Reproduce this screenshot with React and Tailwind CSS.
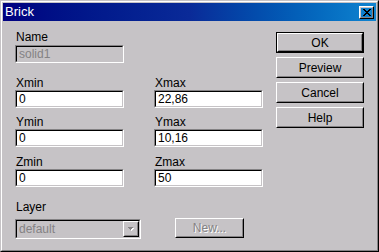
import React from "react";

const font = { fontFamily: '"Liberation Sans", Arial, sans-serif' };

function Label({ children, className = "" }) {
  return (
    <div className={`h-[13px] pl-[1px] text-[12px] leading-[13px] text-black whitespace-nowrap ${className}`}>
      {children}
    </div>
  );
}

function Field({ value, disabled, className = "" }) {
  return (
    <div className={`border border-t-[#848284] border-l-[#848284] border-b-white border-r-white ${className}`}>
      <div
        className={`flex h-full w-full items-center border border-t-black border-l-black border-b-[#c6c3c6] border-r-[#c6c3c6] pl-[2px] text-[12px] leading-[14px] ${
          disabled ? "bg-[#c6c3c6] text-[#848284]" : "bg-white text-black"
        }`}
      >
        {value}
      </div>
    </div>
  );
}

function Raised({ children, className = "" }) {
  return (
    <div className={`border border-t-white border-l-white border-b-black border-r-black ${className}`}>
      <div className="flex h-full w-full items-center justify-center border border-t-[#c6c3c6] border-l-[#c6c3c6] border-b-[#848284] border-r-[#848284]">
        {children}
      </div>
    </div>
  );
}

function Button({ children, def, disabled, className = "" }) {
  const label = (
    <span
      className={`text-[12px] leading-[14px] ${
        disabled ? "text-[#848284] [text-shadow:1px_1px_0_#ffffff]" : "text-black"
      }`}
    >
      {children}
    </span>
  );
  if (def) {
    return (
      <div className={`border border-black ${className}`}>
        <Raised className="h-full w-full">{label}</Raised>
      </div>
    );
  }
  return <Raised className={className}>{label}</Raised>;
}

function Pair({ l1, v1, l2, v2, className = "" }) {
  return (
    <div className={`flex gap-x-[30px] ${className}`}>
      <div className="flex w-[109px] flex-col">
        <Label>{l1}</Label>
        <Field value={v1} className="h-[18px] w-[109px]" />
      </div>
      <div className="flex w-[109px] flex-col">
        <Label>{l2}</Label>
        <Field value={v2} className="h-[18px] w-[109px]" />
      </div>
    </div>
  );
}

export default function App() {
  return (
    <div style={font} className="h-[252px] w-[379px] select-none">
      <div className="h-full w-full border border-t-[#c6c3c6] border-l-[#c6c3c6] border-b-black border-r-black">
        <div className="flex h-full w-full flex-col border border-t-white border-l-white border-b-[#848284] border-r-[#848284] bg-[#c6c3c6] p-[1px]">
          {/* Title bar */}
          <div className="flex h-[18px] items-center justify-between bg-gradient-to-r from-[#000080] via-[#0a2a98] to-[#1084d0]">
            <span className="pl-[2px] text-[13px] leading-[18px] text-white">Brick</span>
            <Raised className="mr-[2px] h-[13px] w-[15px]">
              <svg width="8" height="7" viewBox="0 0 8 7" shapeRendering="crispEdges">
                <path
                  d="M0 0h2v1h1v1h2v-1h1v-1h2v1h-1v1h-1v1h-1v1h1v1h1v1h1v1h-2v-1h-1v-1h-2v1h-1v1h-2v-1h1v-1h1v-1h1v-1h-1v-1h-1v-1h-1z"
                  fill="#000"
                />
              </svg>
            </Raised>
          </div>

          {/* Body */}
          <div className="flex flex-1">
            <div className="flex w-[260px] flex-col pl-[12px] pt-[10px]">
              <Label>Name</Label>
              <Field value="solid1" disabled className="mt-[1px] h-[18px] w-[109px]" />

              <Pair l1="Xmin" v1="0" l2="Xmax" v2="22,86" className="mt-[14px]" />
              <Pair l1="Ymin" v1="0" l2="Ymax" v2="10,16" className="mt-[8px]" />
              <Pair l1="Zmin" v1="0" l2="Zmax" v2="50" className="mt-[9px]" />

              <Label className="mt-[14px]">Layer</Label>
              <div className="mt-[4px] flex items-start">
                <div className="mt-[1px] h-[20px] w-[126px] border border-t-[#848284] border-l-[#848284] border-b-white border-r-white">
                  <div className="flex h-full w-full items-center border border-t-black border-l-black border-b-[#c6c3c6] border-r-[#c6c3c6] bg-[#c6c3c6]">
                    <span className="flex-1 pl-[2px] text-[12px] leading-[14px] text-[#848284]">default</span>
                    <Raised className="h-[16px] w-[16px]">
                      <svg width="7" height="5" viewBox="0 0 7 5" shapeRendering="crispEdges">
                        <path d="M1 1h5v1h-1v1h-1v1h-1v-1h-1v-1h-1z" fill="#ffffff" />
                        <path d="M0 0h5v1h-1v1h-1v1h-1v-1h-1v-1h-1z" fill="#848284" />
                      </svg>
                    </Raised>
                  </div>
                </div>
                <Button disabled className="ml-[34px] h-[20px] w-[69px]">
                  New...
                </Button>
              </div>
            </div>

            <div className="ml-[13px] flex flex-col gap-[4px] pt-[11px]">
              <Button def className="h-[21px] w-[88px]">OK</Button>
              <Button className="h-[21px] w-[88px]">Preview</Button>
              <Button className="h-[21px] w-[88px]">Cancel</Button>
              <Button className="h-[21px] w-[88px]">Help</Button>
            </div>
          </div>
        </div>
      </div>
    </div>
  );
}
